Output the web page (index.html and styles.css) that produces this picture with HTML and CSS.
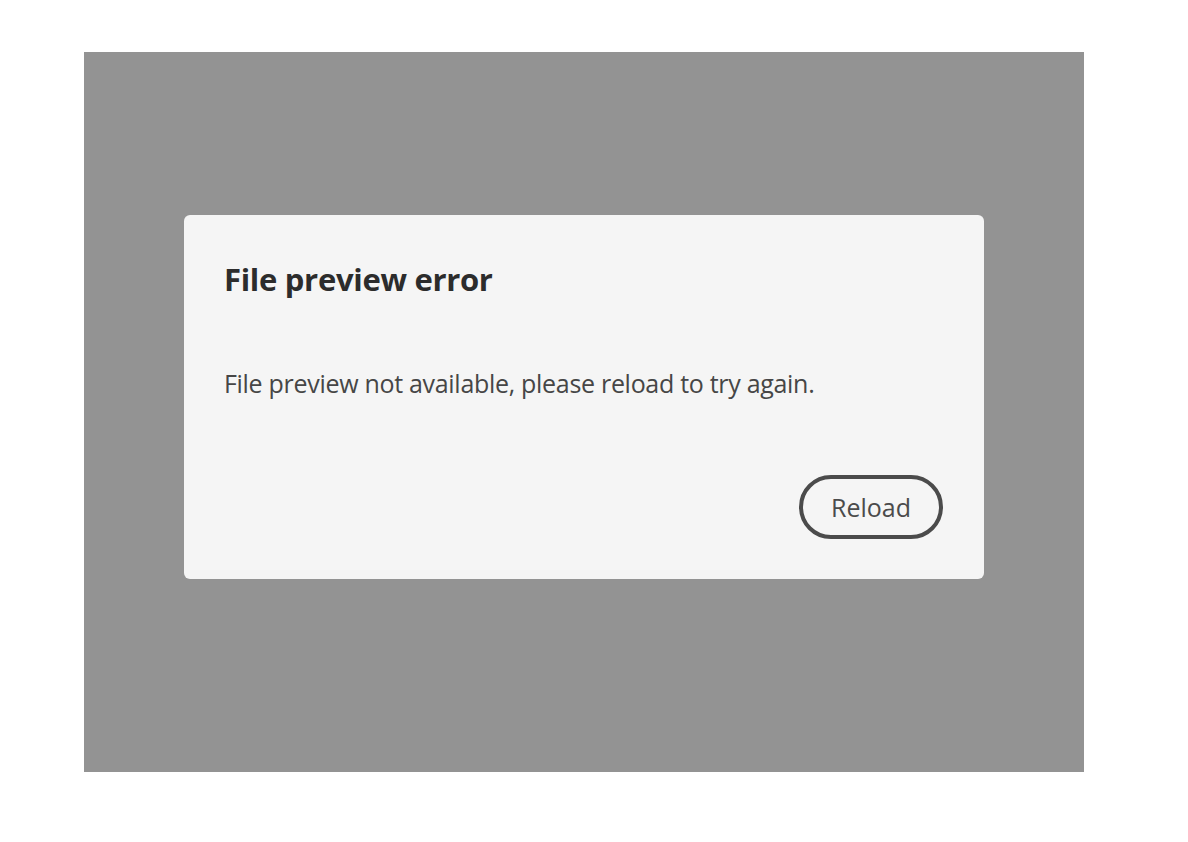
FILE: index.html
```html
<!DOCTYPE html>
<html>
<head>
<meta charset="utf-8">
<link rel="stylesheet" href="styles.css">
</head>
<body>
<div class="stage">
  <div class="overlay">
    <section class="dialog">
      <h1 class="title">File preview error</h1>
      <p class="message">File preview not available, please reload to try again.</p>
      <div class="actions">
        <button class="btn">Reload</button>
      </div>
    </section>
  </div>
</div>
</body>
</html>
```
FILE: styles.css
```css
html, body {
  margin: 0;
  padding: 0;
  background: #ffffff;
}
.stage {
  padding: 52px 0 0 84px;
}
.overlay {
  width: 1000px;
  height: 720px;
  box-sizing: border-box;
  background: #939393;
  padding: 163px 100px 0 100px;
}
.dialog {
  width: 800px;
  height: 364px;
  box-sizing: border-box;
  background: #f5f5f5;
  border-radius: 6px;
  padding: 40px 41px 40px 40px;
  display: flex;
  flex-direction: column;
  font-family: "Open Sans", "Noto Sans", sans-serif;
}
.title {
  margin: 0;
  font-size: 31px;
  line-height: 48px;
  font-weight: 700;
  color: #2c2c2c;
  letter-spacing: -0.3px;
}
.message {
  margin: 62px 0 0 0;
  font-size: 25px;
  line-height: 36px;
  color: #464646;
  letter-spacing: -0.3px;
}
.actions {
  margin-top: auto;
  display: flex;
  justify-content: flex-end;
}
.btn {
  height: 64px;
  min-width: 143px;
  box-sizing: border-box;
  border: 4px solid #4b4b4b;
  border-radius: 32px;
  background: transparent;
  color: #4b4b4b;
  font-family: "Open Sans", "Noto Sans", sans-serif;
  font-size: 25px;
  padding: 0 28px;
}
```
